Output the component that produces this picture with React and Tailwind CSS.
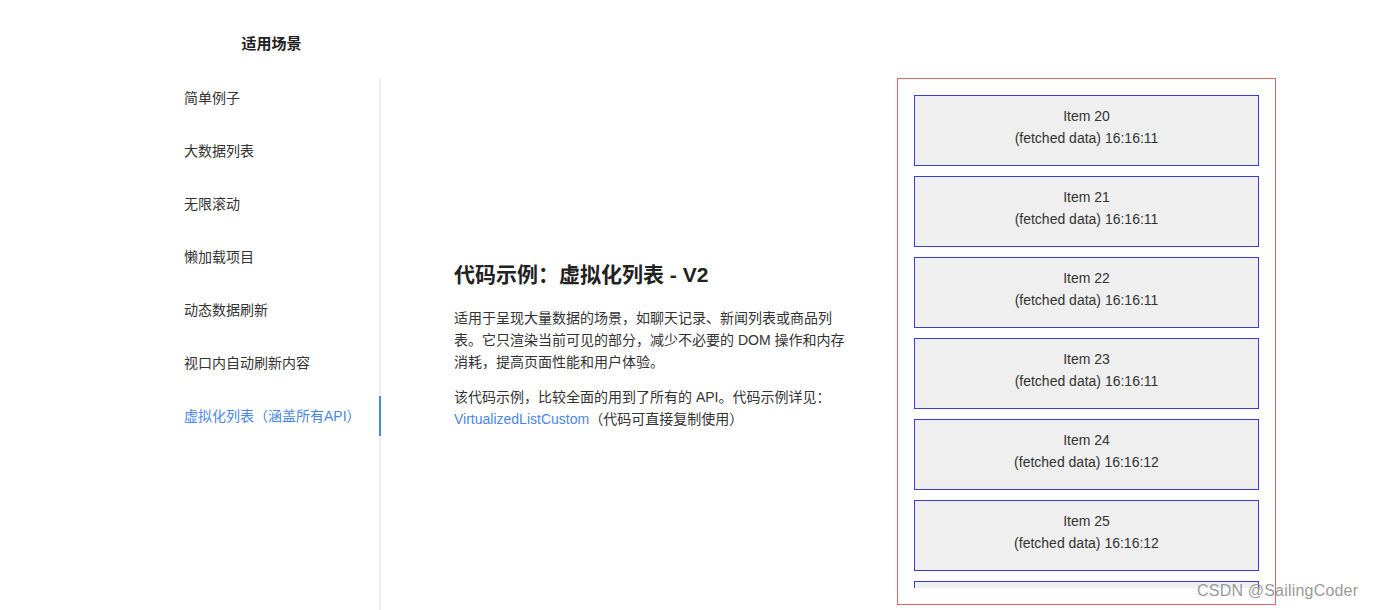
import React from 'react'

const menu = [
  '简单例子',
  '大数据列表',
  '无限滚动',
  '懒加载项目',
  '动态数据刷新',
  '视口内自动刷新内容',
  '虚拟化列表（涵盖所有API）',
]

const items = [
  { id: 20, time: '16:16:11' },
  { id: 21, time: '16:16:11' },
  { id: 22, time: '16:16:11' },
  { id: 23, time: '16:16:11' },
  { id: 24, time: '16:16:12' },
  { id: 25, time: '16:16:12' },
]

const App = () => {
  const active = 6

  return (
    <div
      className="relative w-[1376px] h-[610px] overflow-hidden bg-white text-[#333]"
      style={{ fontFamily: '"Liberation Sans", "Noto Sans CJK SC", sans-serif' }}
    >
      <div className="flex h-full">
        {/* Sidebar */}
        <div className="w-[219px] ml-[162px] flex flex-col shrink-0">
          <div className="h-[78px] flex items-center justify-center pt-[10px]">
            <h2 className="text-[15px] font-bold text-[#222]">适用场景</h2>
          </div>
          <ul className="flex-1 border-r-2 border-[#f0f0f0]">
            {menu.map((label, i) => (
              <li
                key={label}
                className={`h-[40px] mb-[13px] pl-[22px] flex items-center text-[14px] -mr-[2px] ${
                  i === active
                    ? 'text-[#4a86e8] border-r-2 border-[#4a86e8]'
                    : 'text-[#333]'
                }`}
              >
                {label}
              </li>
            ))}
          </ul>
        </div>

        {/* Main */}
        <div className="flex-1 flex items-start pt-[78px]">
          <div className="flex-1 h-[527px] flex items-center pl-[73px]">
            <div className="w-[400px] mt-[8px]">
              <h1 className="text-[21px] font-bold text-[#222] leading-[28px] mb-[18px]">
                代码示例：虚拟化列表 - V2
              </h1>
              <p className="text-[14px] leading-[22px] text-[#333] mb-[13px]">
                适用于呈现大量数据的场景，如聊天记录、新闻列表或商品列
                <br />
                表。它只渲染当前可见的部分，减少不必要的 DOM 操作和内存
                <br />
                消耗，提高页面性能和用户体验。
              </p>
              <p className="text-[14px] leading-[22px] text-[#333]">
                该代码示例，比较全面的用到了所有的 API。代码示例详见：
                <br />
                <span className="text-[#4a86e8]">VirtualizedListCustom</span>（代码可直接复制使用）
              </p>
            </div>
          </div>

          {/* Virtual list box */}
          <div className="w-[379px] h-[527px] border border-[#e06666] p-[16px] mr-[100px] shrink-0">
            <div className="h-full overflow-hidden">
              {items.map(item => (
                <div
                  key={item.id}
                  className="h-[71px] mb-[10px] pt-[9px] border border-[#3b3bd6] bg-[#efefef] flex flex-col items-center text-[14px] leading-[22px] text-[#333]"
                >
                  <span>Item {item.id}</span>
                  <span>(fetched data) {item.time}</span>
                </div>
              ))}
              <div className="h-[71px] border border-[#3b3bd6] bg-[#efefef]" />
            </div>
          </div>
        </div>
      </div>

      {/* Watermark */}
      <div className="absolute left-[1197px] top-[579px] text-[16px] text-[#9a9a9a] tracking-[0.2px]">
        CSDN @SailingCoder
      </div>
    </div>
  )
}

export default App
